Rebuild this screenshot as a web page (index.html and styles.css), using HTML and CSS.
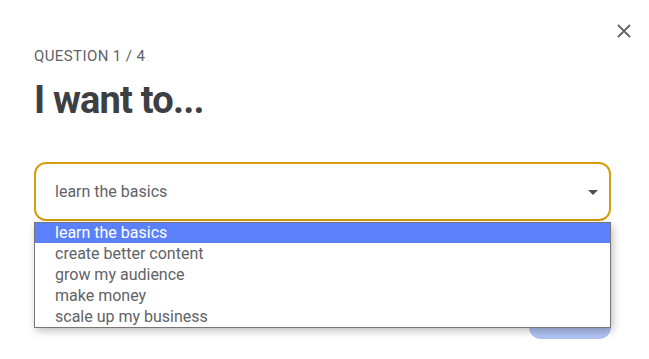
FILE: index.html
```html
<!DOCTYPE html>
<html>
<head>
<meta charset="utf-8">
<link rel="stylesheet" href="styles.css">
</head>
<body>
<div class="dialog">
  <div class="topbar">
    <button class="close" aria-label="Close">
      <svg width="14" height="14" viewBox="0 0 14 14"><path d="M1 1L13 13M13 1L1 13" stroke="#5f6368" stroke-width="1.8" fill="none"/></svg>
    </button>
  </div>
  <div class="label">QUESTION 1 / 4</div>
  <h1 class="title">I want to...</h1>
  <div class="field">
    <div class="select">
      <span class="value">learn the basics</span>
      <span class="caret"></span>
    </div>
    <ul class="menu">
      <li class="item active">learn the basics</li>
      <li class="item">create better content</li>
      <li class="item">grow my audience</li>
      <li class="item">make money</li>
      <li class="item">scale up my business</li>
    </ul>
  </div>
  <div class="actions">
    <button class="next"></button>
  </div>
</div>
</body>
</html>
```
FILE: styles.css
```css
html, body {
  margin: 0;
  padding: 0;
  background: #ffffff;
}
body {
  font-family: Roboto, "Liberation Sans", sans-serif;
  width: 649px;
  height: 359px;
  overflow: hidden;
}
.dialog {
  padding: 0 38px 0 34px;
  display: flex;
  flex-direction: column;
}
.topbar {
  display: flex;
  justify-content: flex-end;
  height: 46px;
  margin-right: -20px;
}
.close {
  border: 0;
  background: none;
  padding: 0;
  margin-top: 24px;
  width: 14px;
  height: 14px;
  display: flex;
}
.label {
  font-size: 15px;
  line-height: 20px;
  color: #5f6368;
  letter-spacing: 0.4px;
}
.title {
  margin: 10px 0 0 0;
  font-size: 38px;
  line-height: 48px;
  font-weight: 700;
  color: #3c4043;
  letter-spacing: -0.8px;
}
.field {
  position: relative;
  margin-top: 38px;
}
.select {
  box-sizing: border-box;
  height: 59px;
  border: 2px solid #d69e0c;
  border-radius: 12px;
  display: flex;
  align-items: center;
  justify-content: space-between;
  padding: 0 11px 0 19px;
}
.value {
  font-size: 16px;
  color: #5f6368;
}
.caret {
  width: 0;
  height: 0;
  border-left: 5px solid transparent;
  border-right: 5px solid transparent;
  border-top: 5px solid #505050;
  margin-top: 1px;
}
.menu {
  position: absolute;
  left: 0;
  top: 60px;
  width: 577px;
  box-sizing: border-box;
  margin: 0;
  padding: 0;
  list-style: none;
  background: #ffffff;
  border: 1px solid #767676;
  box-shadow: 2px 3px 8px rgba(0,0,0,0.25);
  z-index: 2;
}
.item {
  font-size: 16px;
  line-height: 21px;
  height: 21px;
  padding-left: 20px;
  color: #5f6368;
}
.item.active {
  background: #5b80fb;
  color: #ffffff;
  height: 20px;
  line-height: 20px;
}
.actions {
  display: flex;
  justify-content: flex-end;
  margin-top: 82px;
}
.next {
  width: 82px;
  height: 36px;
  border: 0;
  border-radius: 12px;
  background: #b1c3f5;
}
```
